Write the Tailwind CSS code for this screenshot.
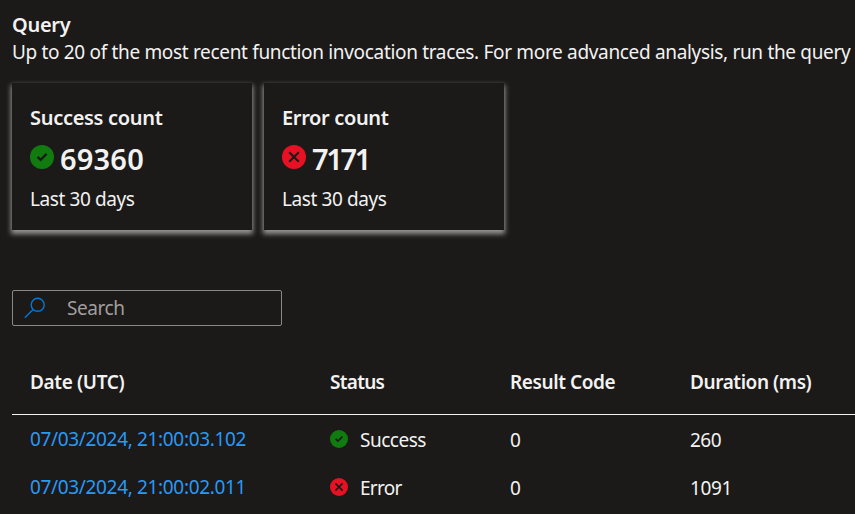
<!DOCTYPE html>
<html lang="en">
<head>
<meta charset="utf-8">
<title>Query</title>
<script src="https://cdn.jsdelivr.net/npm/@tailwindcss/browser@4"></script>
</head>
<body class="h-[514px] overflow-hidden bg-[#1b1a19] font-['Noto_Sans','Open_Sans',sans-serif] text-[19px] leading-[27px] text-[#f3f2f1]">
<svg class="hidden">
  <symbol id="ok" viewBox="0 0 24 24"><circle cx="12" cy="12" r="12" fill="#107c10"/><path d="M7.6 11.9l3 3 6-6" fill="none" stroke="#1b1a19" stroke-width="2.2"/></symbol>
  <symbol id="err" viewBox="0 0 24 24"><circle cx="12" cy="12" r="12" fill="#e81123"/><path d="M7.2 7.2l9.6 9.6M16.8 7.2l-9.6 9.6" fill="none" stroke="#1b1a19" stroke-width="2.1"/></symbol>
</svg>
<main class="flex flex-col pl-3 pt-[11px]">
  <h1 class="text-[20px] font-semibold"><span class="tracking-[-0.3px]">Query</span></h1>
  <p class="mt-px whitespace-nowrap"><span class="tracking-[-0.33px]">Up to 20 of the most recent function invocation traces. For more advanced analysis, run the query</span></p>
  <section class="mt-[17px] flex gap-3">
    <div class="h-[147px] w-60 bg-[#1b1a19] px-[18px] pt-[21px] shadow-[0_3px_5px_1px_#979593]">
      <h2 class="text-[20px] font-semibold"><span class="tracking-[-0.3px]">Success count</span></h2>
      <div class="mt-[9px] flex h-[38px] gap-[6px] text-[29px] leading-[38px] font-semibold"><svg class="mt-[5px] size-6"><use href="#ok"/></svg><span class="tracking-[0.2px]">69360</span></div>
      <p class="mt-[8px]"><span class="tracking-[-0.4px]">Last 30 days</span></p>
    </div>
    <div class="h-[147px] w-60 bg-[#1b1a19] px-[18px] pt-[21px] shadow-[0_3px_5px_1px_#979593]">
      <h2 class="text-[20px] font-semibold"><span class="tracking-[-0.35px]">Error count</span></h2>
      <div class="mt-[9px] flex h-[38px] gap-[6px] text-[29px] leading-[38px] font-semibold"><svg class="mt-[5px] size-6"><use href="#err"/></svg><span class="tracking-[-2.3px]">7171</span></div>
      <p class="mt-[8px]"><span class="tracking-[-0.4px]">Last 30 days</span></p>
    </div>
  </section>
  <div class="mt-[60px] flex h-9 w-[270px] items-start rounded-[2px] border border-[#8a8886] pl-[11px] pt-[4px] text-[#a19f9d]">
    <svg class="mt-[2px] size-[22px] shrink-0" viewBox="0 0 22 22" fill="none" stroke="#0078d4" stroke-width="1.4"><circle cx="13.7" cy="7.8" r="6.5"/><path d="M9.1 12.4L.8 20.7"/></svg>
    <span class="ml-[21px] tracking-[-0.45px]">Search</span>
  </div>
  <section class="mt-[29px]">
    <div class="grid h-[60px] grid-cols-[300px_180px_180px_1fr] border-b border-[#f3f2f1] pl-[18px] pt-[14px] font-semibold">
      <div><span class="tracking-[-0.35px]">Date (UTC)</span></div>
      <div><span class="tracking-[-0.7px]">Status</span></div>
      <div><span class="tracking-[-0.4px]">Result Code</span></div>
      <div><span class="tracking-[-0.42px]">Duration (ms)</span></div>
    </div>
    <div class="grid h-12 grid-cols-[300px_180px_180px_1fr] pl-[18px] pt-[12px]">
      <a class="-mt-px text-[#2899f5]"><span class="tracking-[-0.34px]">07/03/2024, 21:00:03.102</span></a>
      <div class="flex gap-3"><svg class="mt-[3px] size-[18px]"><use href="#ok"/></svg><span class="tracking-[-0.5px]">Success</span></div>
      <div>0</div>
      <div><span class="tracking-[-0.5px]">260</span></div>
    </div>
    <div class="grid h-12 grid-cols-[300px_180px_180px_1fr] pl-[18px] pt-[12px]">
      <a class="-mt-px text-[#2899f5]"><span class="tracking-[-0.34px]">07/03/2024, 21:00:02.011</span></a>
      <div class="flex gap-3"><svg class="mt-[3px] size-[18px]"><use href="#err"/></svg><span class="tracking-[-0.7px]">Error</span></div>
      <div>0</div>
      <div><span class="tracking-[-0.4px]">1091</span></div>
    </div>
  </section>
</main>
</body>
</html>
